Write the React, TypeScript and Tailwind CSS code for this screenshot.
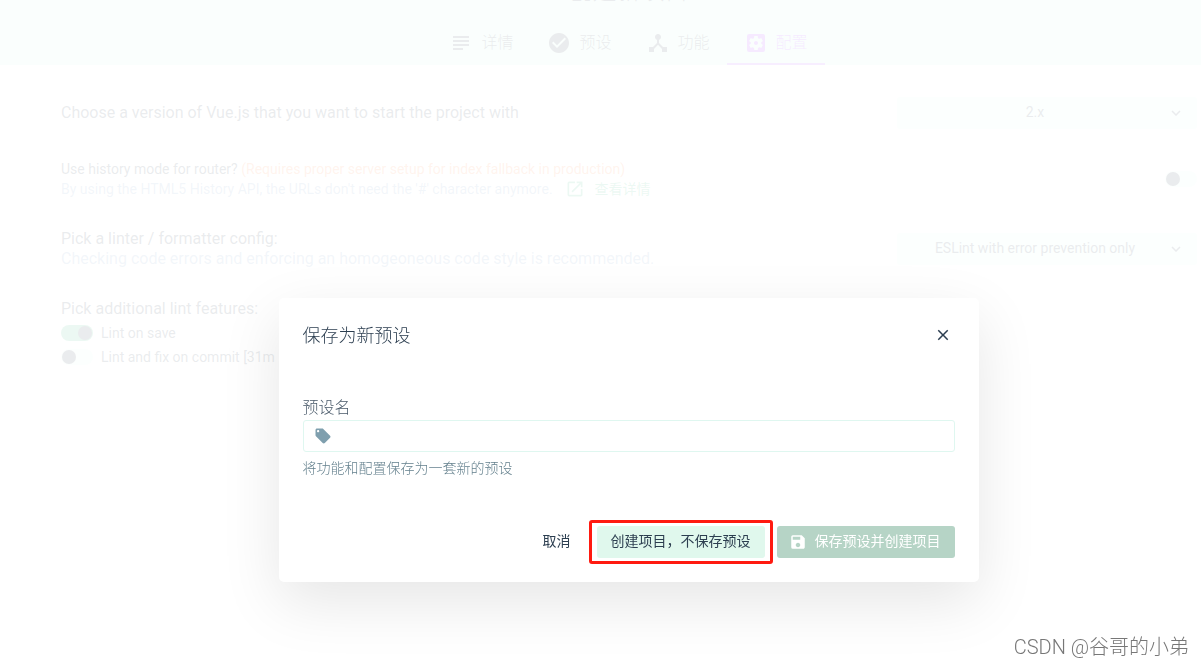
import type { ReactNode } from 'react'
import type { IconType } from 'react-icons'
import {
  MdCheckCircle,
  MdClose,
  MdDeviceHub,
  MdKeyboardArrowDown,
  MdLocalOffer,
  MdOpenInNew,
  MdSave,
  MdSettingsApplications,
  MdSubject,
} from 'react-icons/md'

const tabs: { label: string; icon: IconType; active?: boolean }[] = [
  { label: '详情', icon: MdSubject },
  { label: '预设', icon: MdCheckCircle },
  { label: '功能', icon: MdDeviceHub },
  { label: '配置', icon: MdSettingsApplications, active: true },
]

function Header() {
  return (
    <header className="h-[65px] overflow-hidden bg-[#c8f5e4] pl-14">
      <div className="flex h-full flex-col items-center justify-end">
        <h1 className="text-2xl leading-6 font-light">创建新项目</h1>
        <nav className="mt-[18px] flex">
          {tabs.map(({ label, icon: Icon, active }) => (
            <button
              key={label}
              type="button"
              className={
                active
                  ? 'flex h-11 items-center gap-2 border-b-2 border-[#b050ff] px-[17px] pt-0.5 font-light text-[#a030ff]'
                  : 'flex h-11 items-center gap-2 border-b-2 border-transparent px-[17px] pt-0.5 font-light'
              }
            >
              <Icon className="size-6" />
              <span>{label}</span>
            </button>
          ))}
        </nav>
      </div>
    </header>
  )
}

function SelectBox({ label, value }: { label: string; value: string }) {
  return (
    <div className="relative w-[300px] shrink-0">
      <select
        aria-label={label}
        className="h-8 w-full appearance-none rounded-[3px] bg-[#dcf8ee] pr-6 pb-0.5 text-center text-sm [text-align-last:center]"
      >
        <option>{value}</option>
      </select>
      <MdKeyboardArrowDown className="pointer-events-none absolute top-[7px] right-3 size-[18px]" />
    </div>
  )
}

function Switch({ id, label, checked = false }: { id: string; label?: string; checked?: boolean }) {
  return (
    <input
      id={id}
      type="checkbox"
      role="switch"
      aria-label={label}
      defaultChecked={checked}
      className="h-4 w-8 shrink-0 appearance-none rounded-full bg-[#dcf8ee] p-px before:block before:size-3.5 before:rounded-full before:bg-[#2c3e50] checked:bg-[#42b983] checked:before:ml-4"
    />
  )
}

function Row({ children }: { children: ReactNode }) {
  return <div className="flex items-center justify-between gap-4">{children}</div>
}

function Configuration() {
  return (
    <main className="flex flex-col gap-[30px] pt-8 pr-1 pl-[61px]">
      <Row>
        <p>Choose a version of Vue.js that you want to start the project with</p>
        <SelectBox label="Vue.js version" value="2.x" />
      </Row>
      <Row>
        <div className="text-sm leading-5">
          <p>
            Use history mode for router?{' '}
            <span className="text-[#ff8a50]">(Requires proper server setup for index fallback in production)</span>
          </p>
          <p className="flex items-center text-[#7f9fc5]">
            By using the HTML5 History API, the URLs don't need the '#' character anymore.
            <a href="#more" className="ml-3 flex items-center gap-2.5 text-[#42b983]">
              <MdOpenInNew className="size-5" />
              查看详情
            </a>
          </p>
        </div>
        <Switch id="history-mode" label="Use history mode for router" />
      </Row>
      <Row>
        <div className="leading-5">
          <p>Pick a linter / formatter config:</p>
          <p className="text-[#7f9fc5]">
            Checking code errors and enforcing an homogeoneous code style is recommended.
          </p>
        </div>
        <SelectBox label="Linter config" value="ESLint with error prevention only" />
      </Row>
      <div>
        <p className="mb-0.5 leading-5">Pick additional lint features:</p>
        <div className="flex h-6 items-center gap-2 text-sm">
          <Switch id="lint-save" checked />
          <label htmlFor="lint-save">Lint on save</label>
        </div>
        <div className="flex h-6 items-center gap-2 text-sm">
          <Switch id="lint-commit" />
          <label htmlFor="lint-commit">Lint and fix on commit [31m</label>
        </div>
      </div>
    </main>
  )
}

function SavePresetModal() {
  return (
    <div className="fixed inset-0 flex justify-center bg-white/90 pt-[298px] pl-14">
      <div
        role="dialog"
        aria-labelledby="modal-title"
        className="w-full max-w-[700px] self-start rounded-[5px] bg-white p-6 shadow-[0_20px_60px_rgba(0,0,0,0.1)]"
      >
        <div className="flex items-center justify-between">
          <h2 id="modal-title" className="pt-0.5 text-lg leading-6 font-light">
            保存为新预设
          </h2>
          <button type="button" aria-label="关闭" className="flex size-6 items-center justify-center">
            <MdClose className="size-[18px]" />
          </button>
        </div>

        <div className="mt-12">
          <label htmlFor="preset-name" className="block leading-6 font-light text-[#4a5a6a]">
            预设名
          </label>
          <div className="flex h-8 items-center gap-2 rounded-[3px] border border-[#dff7f0] px-2.5">
            <MdLocalOffer className="size-[18px] text-[#7f9fae]" />
            <input id="preset-name" type="text" className="min-w-0 flex-1 text-sm outline-none" />
          </div>
          <p className="mt-1.5 text-sm leading-5 font-light text-[#64808d]">将功能和配置保存为一套新的预设</p>
        </div>

        <div className="mt-12 flex justify-end gap-3 text-sm">
          <button type="button" className="h-8 px-3.5 pb-0.5">
            取消
          </button>
          <div className="relative">
            <button type="button" className="h-8 rounded-[3px] bg-[#e0f8ed] px-3.5 pb-0.5">
              创建项目，不保存预设
            </button>
            <div className="pointer-events-none absolute -inset-x-2 -inset-y-1.5 rounded-[3px] border-3 border-[#ff1a10]" />
          </div>
          <button
            type="button"
            className="flex h-8 items-center gap-2 rounded-[3px] bg-[#b6d4c6] pr-3.5 pl-3 text-white"
          >
            <MdSave className="size-[18px]" />
            <span className="pb-0.5">保存预设并创建项目</span>
          </button>
        </div>
      </div>
    </div>
  )
}

export default function App() {
  return (
    <div className="min-h-screen bg-white font-[Roboto,'Noto_Sans_CJK_SC',sans-serif] text-base text-[#2c3e50]">
      <Header />
      <Configuration />
      <SavePresetModal />
      <div className="fixed right-3 bottom-1 text-xl font-light text-[#777777]">CSDN @谷哥的小弟</div>
    </div>
  )
}
